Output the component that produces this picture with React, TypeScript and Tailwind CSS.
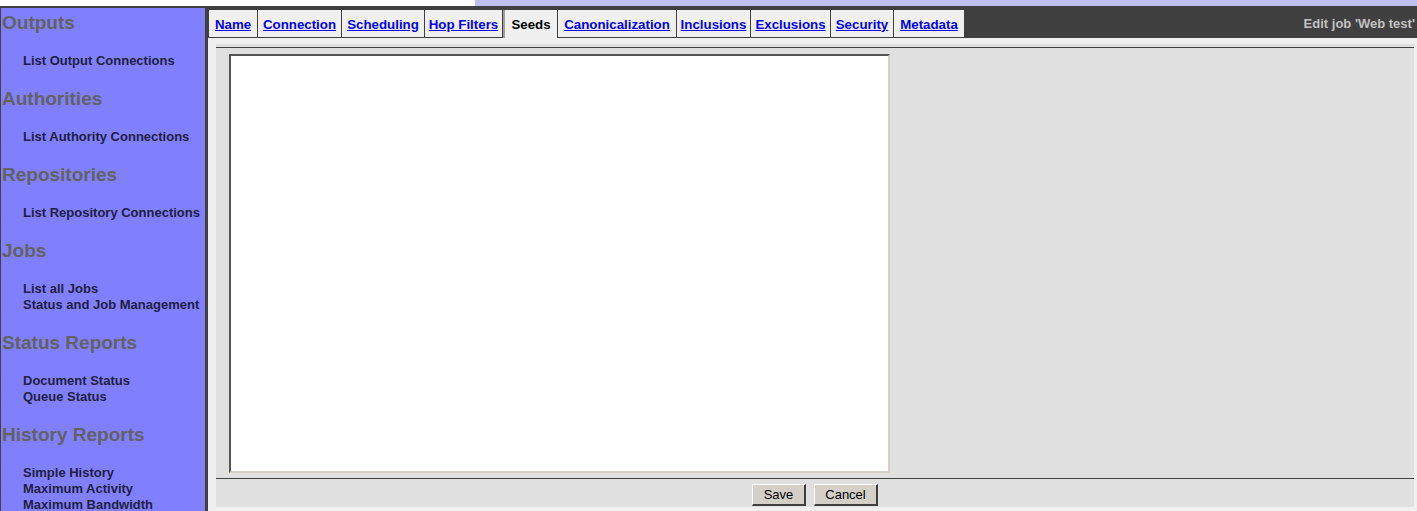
import React from "react";

const sections = [
  { title: "Outputs", links: ["List Output Connections"] },
  { title: "Authorities", links: ["List Authority Connections"] },
  { title: "Repositories", links: ["List Repository Connections"] },
  { title: "Jobs", links: ["List all Jobs", "Status and Job Management"] },
  { title: "Status Reports", links: ["Document Status", "Queue Status"] },
  {
    title: "History Reports",
    links: ["Simple History", "Maximum Activity", "Maximum Bandwidth"],
  },
];

const tabs = [
  { label: "Name", w: "w-[48px]" },
  { label: "Connection", w: "w-[83px]" },
  { label: "Scheduling", w: "w-[82px]" },
  { label: "Hop Filters", w: "w-[77px]" },
  { label: "Seeds", w: "w-[54px]", active: true },
  { label: "Canonicalization", w: "w-[118px]" },
  { label: "Inclusions", w: "w-[73px]" },
  { label: "Exclusions", w: "w-[79px]" },
  { label: "Security", w: "w-[62px]" },
  { label: "Metadata", w: "w-[70px]" },
];

export default function App() {
  return (
    <div className="flex h-[511px] w-[1417px] flex-col overflow-hidden bg-[#f0f0f0] font-['Liberation_Sans',Arial,sans-serif]">
      {/* top strip */}
      <div className="flex h-[6px] shrink-0">
        <div className="w-[475px] bg-white" />
        <div className="flex-1 bg-[#c0c0f0]" />
      </div>
      <div className="h-[2px] shrink-0 bg-[#404040]" />

      <div className="flex flex-1 overflow-hidden">
        {/* Sidebar */}
        <aside className="w-[208px] shrink-0 overflow-hidden border-l border-r-[3px] border-[#404040] bg-[#8080ff] pl-[1px] pt-[4px]">
          {sections.map((s) => (
            <div key={s.title}>
              <h2 className="h-[22px] whitespace-nowrap text-[19px] font-bold leading-[22px] text-[#626262]">
                {s.title}
              </h2>
              <ul className="py-[19px] pl-[21px]">
                {s.links.map((l) => (
                  <li
                    key={l}
                    className="h-[16px] whitespace-nowrap text-[13px] font-bold leading-[16px] text-[#202040]"
                  >
                    {l}
                  </li>
                ))}
              </ul>
            </div>
          ))}
        </aside>

        {/* Main */}
        <div className="flex flex-1 flex-col">
          {/* Tab bar */}
          <div className="flex h-[30px] shrink-0 items-start bg-[#404040] pt-[2px]">
            {tabs.map((t) =>
              t.active ? (
                <div
                  key={t.label}
                  className={`ml-[1px] flex h-[28px] ${t.w} items-center justify-center border-l-2 border-[#a0a0a0] bg-[#f0f0f0] pt-[1px] text-[13.3px] font-bold text-black`}
                >
                  {t.label}
                </div>
              ) : (
                <div
                  key={t.label}
                  className={`ml-[1px] flex h-[27px] ${t.w} items-center justify-center bg-[#f0f0f0] pt-[2px] text-[13.3px] font-bold`}
                >
                  <a href="#" className="text-[#0000ee] underline">
                    {t.label}
                  </a>
                </div>
              )
            )}
            <div className="ml-auto flex h-[28px] items-center pr-[2px] text-[13px] font-bold text-[#c0c0c0]">
              Edit job 'Web test'
            </div>
          </div>

          {/* Content */}
          <div className="flex flex-1 flex-col bg-[#f0f0f0] pb-[4px] pl-[8px] pr-[3px] pt-[6px]">
            <div className="flex flex-1 flex-col bg-[#e0e0e0] pb-[1px] pt-[3px]">
              <div className="h-[1px] bg-[#404040]" />
              <div className="mt-[6px] pl-[13px]">
                <textarea
                  className="block h-[419px] w-[661px] resize-none border-2 border-b-[#d4d0c8] border-l-[#555555] border-r-[#d4d0c8] border-t-[#555555] bg-white outline-none"
                  defaultValue=""
                />
              </div>
              <div className="mt-[5px] h-[1px] bg-[#404040]" />
              <div className="mt-[5px] flex justify-center gap-[8px]">
                <button className="h-[22px] w-[54px] border-b-2 border-l border-r-2 border-t border-b-[#404040] border-l-white border-r-[#404040] border-t-white bg-[#d4d0c8] text-[13px] text-black">
                  Save
                </button>
                <button className="h-[22px] w-[64px] border-b-2 border-l border-r-2 border-t border-b-[#404040] border-l-white border-r-[#404040] border-t-white bg-[#d4d0c8] text-[13px] text-black">
                  Cancel
                </button>
              </div>
            </div>
          </div>
        </div>
      </div>
    </div>
  );
}
